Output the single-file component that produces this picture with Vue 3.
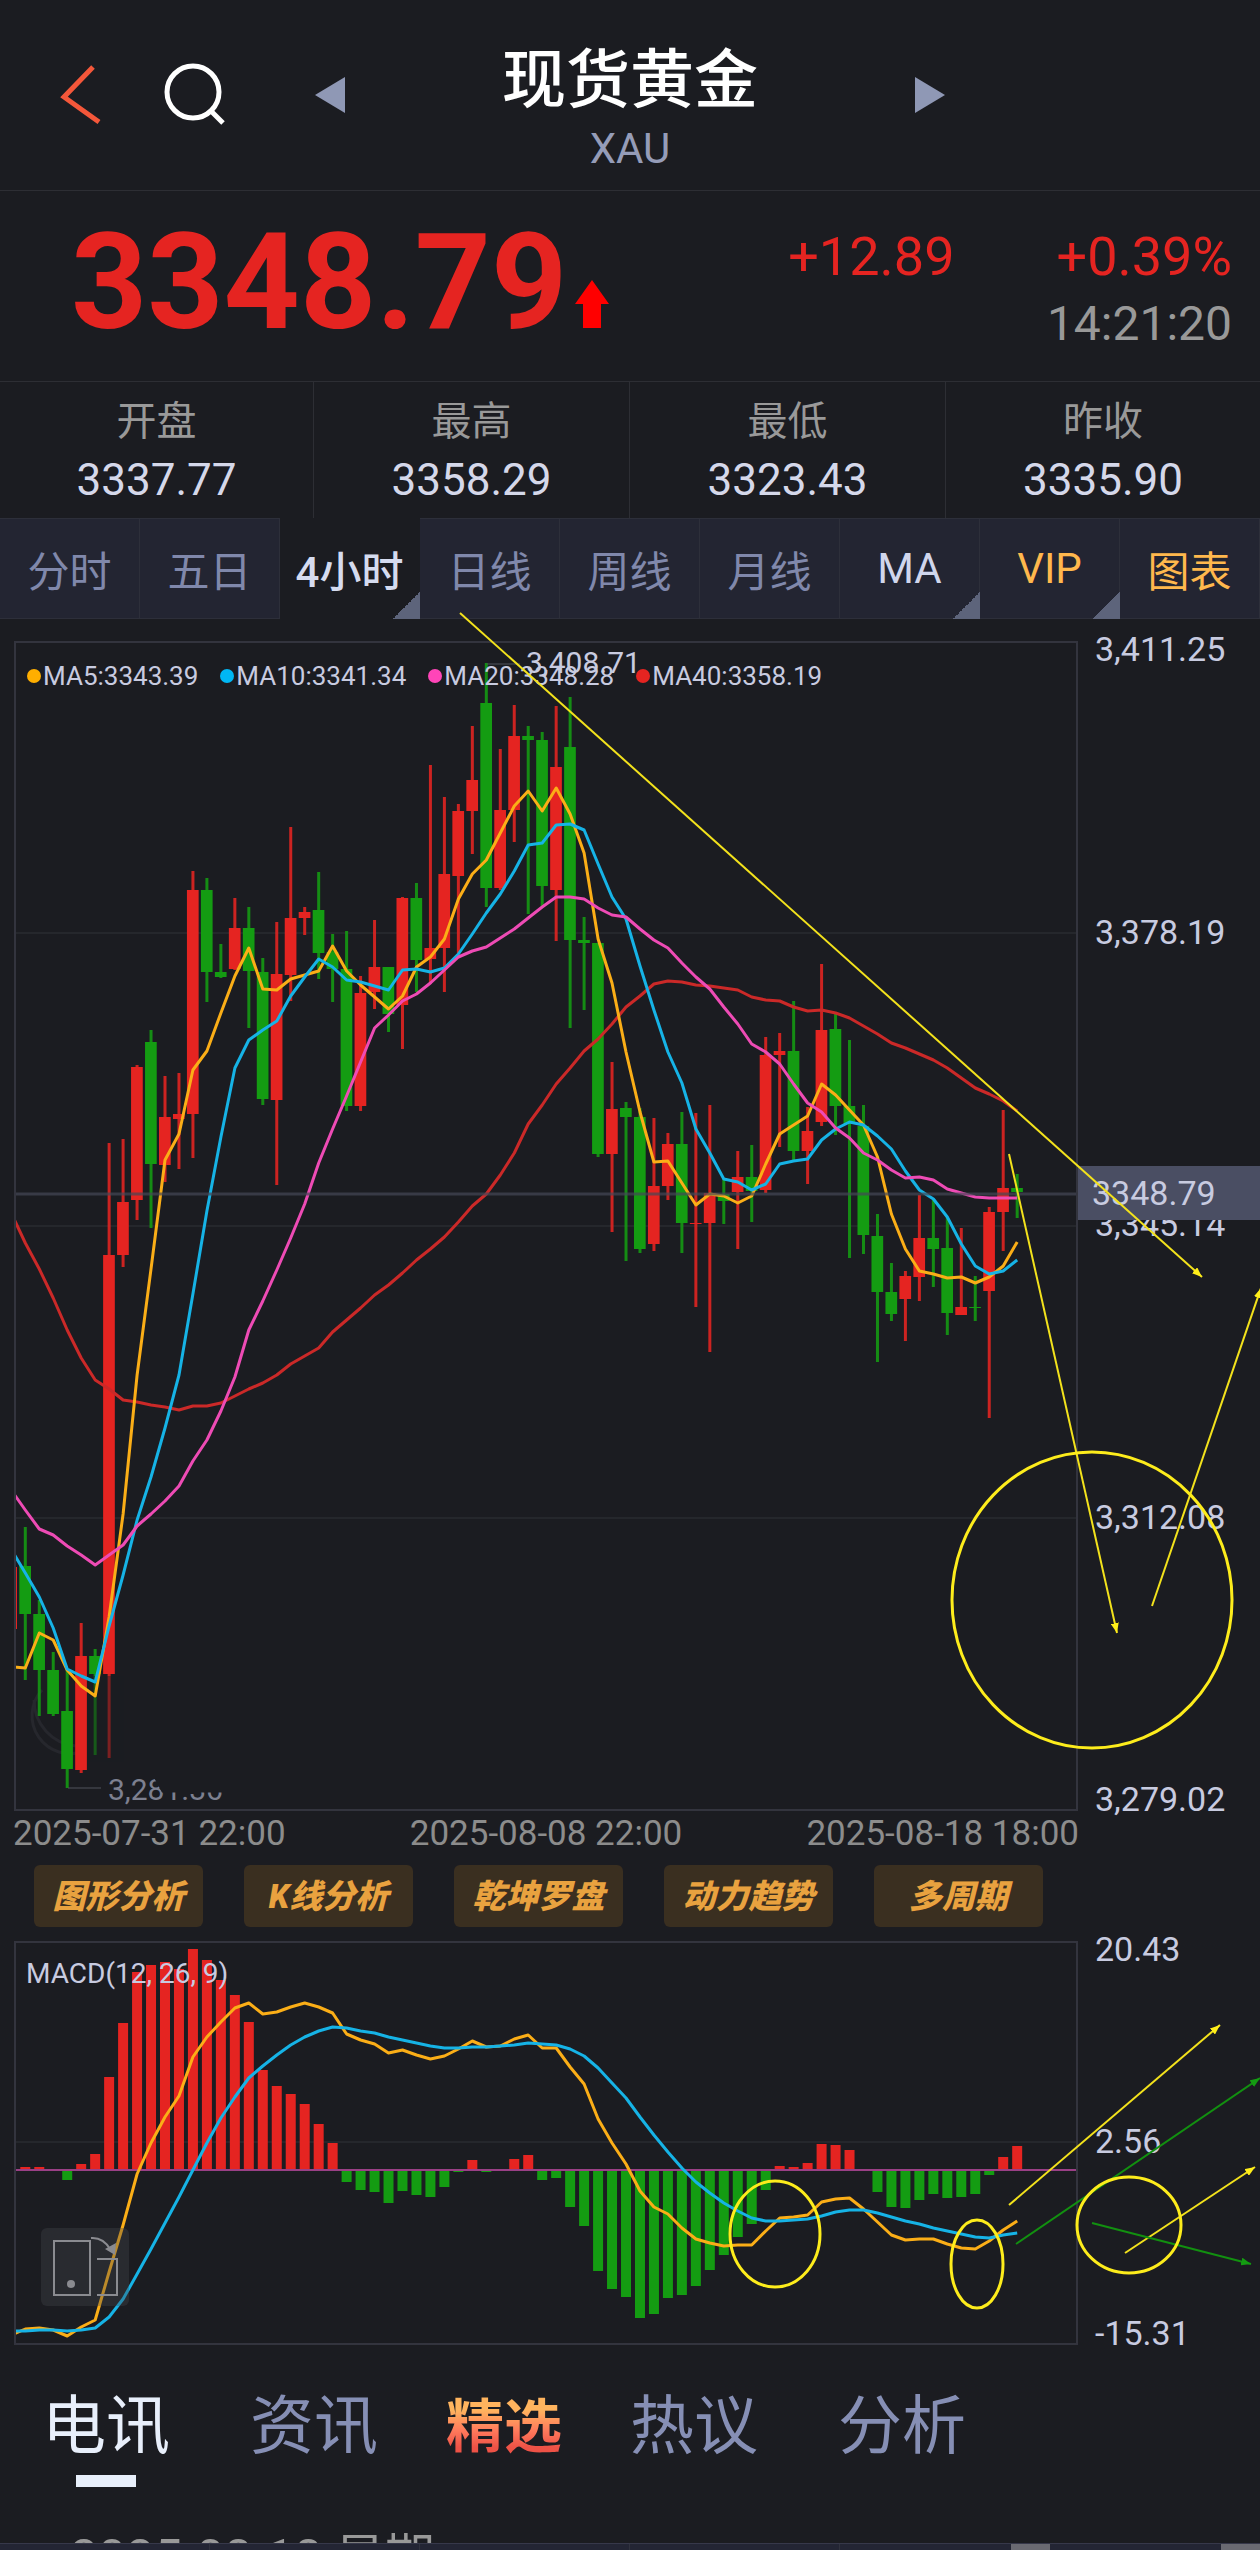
<script setup>
import { computed, ref } from 'vue';

const stats = [
  { label: '开盘', value: '3337.77' },
  { label: '最高', value: '3358.29' },
  { label: '最低', value: '3323.43' },
  { label: '昨收', value: '3335.90' }
]

const periods = [
  { name: '分时' },
  { name: '五日' },
  { name: '4小时', more: true },
  { name: '日线' },
  { name: '周线' },
  { name: '月线' },
  { name: 'MA', more: true, kind: 'light' },
  { name: 'VIP', more: true, kind: 'gold' },
  { name: '图表', kind: 'gold' }
]
const period = ref('4小时')

const legend = [
  { text: 'MA5:3343.39', color: 'orange' },
  { text: 'MA10:3341.34', color: 'blue' },
  { text: 'MA20:3348.28', color: 'pink' },
  { text: 'MA40:3358.19', color: 'red' }
]
const prices = ['3,411.25', '3,378.19', '3,345.14', '3,312.08', '3,279.02']
const macdAxis = ['20.43', '2.56', '-15.31']
const dates = ['2025-07-31 22:00', '2025-08-08 22:00', '2025-08-18 18:00']
const tools = ['图形分析', 'K线分析', '乾坤罗盘', '动力趋势', '多周期']

const newsTabs = ['电讯', '资讯', '精选', '热议', '分析']
const newsTab = ref('电讯')

// chart space: the plot starts at x 14, one candle every 13.97
const LEFT = 14
const FIRST = 25.3
const STEP = 13.97
const ZERO = 2170

// direction (1 up, 0 down), high, body top, body bottom, low
const candles = [
  [0, 1527, 1566, 1614, 1680], [0, 1600, 1614, 1670, 1716], [0, 1652, 1670, 1714, 1716],
  [0, 1670, 1711, 1769, 1788], [1, 1623, 1656, 1770, 1773], [0, 1649, 1656, 1674, 1755],
  [1, 1143, 1255, 1674, 1758], [1, 1139, 1202, 1255, 1267], [1, 1065, 1067, 1200, 1220],
  [0, 1030, 1042, 1164, 1228], [1, 1076, 1117, 1165, 1182], [1, 1073, 1114, 1119, 1169],
  [1, 871, 890, 1114, 1158], [0, 878, 890, 972, 1002], [0, 944, 972, 977, 978],
  [1, 898, 928, 969, 970], [0, 907, 928, 971, 1028], [0, 958, 972, 1099, 1105],
  [1, 922, 974, 1100, 1185], [1, 827, 918, 975, 1001], [1, 907, 912, 918, 935],
  [0, 872, 910, 953, 979], [0, 934, 952, 969, 1002], [0, 931, 969, 1106, 1111],
  [1, 976, 993, 1106, 1111], [1, 920, 967, 992, 1009], [0, 967, 967, 1014, 1032],
  [1, 897, 898, 1005, 1049], [0, 883, 898, 960, 992], [1, 765, 948, 959, 984],
  [1, 797, 874, 948, 992], [1, 804, 811, 876, 953], [1, 726, 780, 811, 854],
  [0, 663, 703, 888, 907], [1, 749, 810, 888, 890], [1, 705, 736, 810, 842],
  [0, 726, 736, 740, 914], [0, 732, 740, 886, 907], [1, 706, 767, 890, 941],
  [0, 697, 747, 940, 1028], [0, 917, 940, 943, 1010], [0, 943, 943, 1154, 1157],
  [1, 1062, 1109, 1154, 1232], [0, 1102, 1108, 1117, 1261], [0, 1108, 1117, 1249, 1253],
  [1, 1118, 1186, 1244, 1251], [1, 1133, 1144, 1186, 1200], [0, 1112, 1144, 1223, 1253],
  [1, 1113, 1223, 1224, 1307], [1, 1105, 1193, 1223, 1352], [0, 1179, 1194, 1201, 1224],
  [1, 1151, 1177, 1192, 1249], [0, 1145, 1177, 1191, 1222], [1, 1037, 1055, 1190, 1193],
  [1, 1033, 1051, 1055, 1147], [0, 1001, 1051, 1151, 1160], [1, 1107, 1131, 1151, 1184],
  [1, 964, 1030, 1122, 1126], [0, 1013, 1029, 1106, 1135], [0, 1040, 1106, 1124, 1258],
  [0, 1105, 1126, 1235, 1254], [0, 1214, 1236, 1292, 1362], [0, 1263, 1292, 1314, 1321],
  [1, 1271, 1276, 1299, 1341], [1, 1195, 1238, 1277, 1301], [0, 1200, 1238, 1249, 1287],
  [0, 1217, 1248, 1313, 1335], [1, 1228, 1307, 1315, 1315], [0, 1276, 1307, 1308, 1321],
  [1, 1207, 1212, 1291, 1418], [1, 1110, 1188, 1212, 1251], [0, 1174, 1188, 1192, 1218]
]

// the first value of every line sits on the left edge of the plot
const averages = [
  { color: 'red', ys: [1219, 1243, 1269, 1298, 1330, 1358, 1380, 1389, 1400, 1402, 1405, 1407, 1410, 1406, 1406, 1403, 1396, 1389, 1383, 1375, 1364, 1356, 1348, 1332, 1320, 1308, 1295, 1285, 1273, 1260, 1249, 1237, 1222, 1206, 1194, 1175, 1153, 1124, 1105, 1084, 1068, 1051, 1039, 1024, 1007, 996, 984, 981, 982, 985, 986, 988, 990, 997, 1000, 1001, 1007, 1011, 1010, 1013, 1018, 1026, 1034, 1043, 1048, 1054, 1060, 1068, 1078, 1088, 1094, 1101, 1111] },
  { color: 'orange', ys: [1667, 1668, 1633, 1640, 1670, 1686, 1696, 1617, 1514, 1375, 1269, 1160, 1134, 1070, 1051, 1013, 976, 948, 989, 990, 979, 975, 971, 946, 971, 985, 997, 1009, 996, 967, 957, 939, 899, 874, 860, 833, 806, 791, 811, 788, 814, 853, 939, 983, 1052, 1112, 1162, 1161, 1183, 1205, 1194, 1196, 1203, 1196, 1164, 1134, 1125, 1116, 1084, 1095, 1110, 1125, 1157, 1214, 1249, 1271, 1274, 1278, 1277, 1283, 1277, 1266, 1242] },
  { color: 'blue', ys: [1554, 1573, 1597, 1628, 1669, 1676, 1682, 1626, 1575, 1520, 1477, 1428, 1375, 1294, 1211, 1137, 1068, 1040, 1030, 1021, 996, 977, 959, 967, 980, 982, 986, 990, 970, 969, 972, 968, 954, 934, 913, 894, 871, 845, 843, 825, 824, 830, 864, 897, 919, 966, 1010, 1052, 1083, 1129, 1153, 1179, 1182, 1190, 1184, 1164, 1161, 1159, 1140, 1129, 1122, 1125, 1136, 1149, 1171, 1190, 1199, 1217, 1244, 1266, 1274, 1271, 1260] },
  { color: 'pink', ys: [1494, 1510, 1529, 1535, 1546, 1555, 1565, 1555, 1545, 1526, 1514, 1501, 1486, 1461, 1440, 1411, 1377, 1330, 1301, 1270, 1238, 1204, 1163, 1129, 1096, 1062, 1028, 1015, 1001, 994, 983, 970, 957, 951, 947, 938, 929, 918, 907, 897, 897, 899, 908, 915, 917, 929, 940, 948, 963, 977, 989, 1007, 1024, 1044, 1052, 1064, 1084, 1103, 1112, 1128, 1138, 1153, 1160, 1170, 1178, 1177, 1180, 1189, 1193, 1197, 1198, 1198, 1198] }
]

const histogram = [2167, 2167, 2170, 2180, 2164, 2154, 2077, 2023, 1972, 1965, 1962, 1969, 1949, 1960, 1980, 1995, 2022, 2070, 2086, 2094, 2104, 2124, 2143, 2182, 2190, 2192, 2203, 2191, 2195, 2197, 2187, 2172, 2160, 2172, 2169, 2159, 2155, 2180, 2178, 2207, 2226, 2271, 2289, 2297, 2318, 2314, 2298, 2295, 2286, 2270, 2255, 2237, 2224, 2190, 2166, 2167, 2163, 2144, 2145, 2150, 2170, 2192, 2207, 2208, 2200, 2194, 2198, 2197, 2194, 2175, 2157, 2146]

const macdLines = [
  { color: 'orange', ys: [2334, 2329, 2328, 2330, 2336, 2327, 2320, 2272, 2225, 2174, 2143, 2117, 2096, 2057, 2037, 2022, 2008, 2003, 2014, 2012, 2007, 2003, 2007, 2013, 2034, 2040, 2044, 2053, 2050, 2055, 2059, 2056, 2049, 2041, 2047, 2046, 2039, 2035, 2048, 2048, 2067, 2084, 2119, 2143, 2164, 2191, 2207, 2214, 2228, 2239, 2243, 2246, 2245, 2245, 2231, 2218, 2217, 2215, 2202, 2199, 2198, 2209, 2222, 2235, 2240, 2239, 2239, 2244, 2248, 2249, 2241, 2230, 2221] },
  { color: 'blue', ys: [2331, 2331, 2330, 2330, 2331, 2330, 2328, 2317, 2299, 2274, 2249, 2223, 2197, 2170, 2143, 2118, 2097, 2078, 2066, 2055, 2045, 2037, 2031, 2027, 2028, 2031, 2033, 2037, 2040, 2043, 2046, 2048, 2048, 2047, 2047, 2046, 2045, 2043, 2044, 2045, 2049, 2056, 2068, 2083, 2098, 2117, 2135, 2152, 2168, 2182, 2193, 2203, 2211, 2218, 2221, 2221, 2220, 2219, 2216, 2212, 2210, 2210, 2213, 2217, 2221, 2224, 2228, 2231, 2234, 2237, 2238, 2235, 2233] }
]

const arrows = [
  { color: 'yellow', from: [460, 613], to: [1202, 1277] },
  { color: 'yellow', from: [1009, 1154], to: [1117, 1633] },
  { color: 'yellow', from: [1152, 1606], to: [1261, 1288] },
  { color: 'yellow', from: [1009, 2205], to: [1220, 2025] },
  { color: 'green', from: [1016, 2244], to: [1260, 2078] },
  { color: 'yellow', from: [1125, 2253], to: [1255, 2167] },
  { color: 'green', from: [1092, 2223], to: [1251, 2264] }
]
const rings = [
  [1092, 1600, 140, 148],
  [775, 2234, 45, 53],
  [977, 2264, 26, 44],
  [1129, 2225, 52, 48]
]

const xAt = (i) => FIRST + STEP * i

function toPoints(ys) {
  return ys.map((y, i) => `${i === 0 ? LEFT : xAt(i - 1).toFixed(1)},${y}`).join(' ')
}

const candleShapes = computed(() => candles.map(([up, high, top, bottom, low], i) => ({
  color: up ? 'red' : 'green',
  x: xAt(i),
  high,
  top,
  body: Math.max(bottom - top, 1),
  wick: low - high
})))

const bars = computed(() => histogram.map((y, i) => ({
  color: y < ZERO ? 'red' : 'green',
  x: xAt(i) - 5,
  y: Math.min(y, ZERO),
  height: Math.abs(y - ZERO)
})))
</script>

<template>
  <div class="page">
    <header class="header">
      <div class="header-left">
        <button class="icon-btn" aria-label="返回">
          <svg width="42" height="62" viewBox="0 0 42 62"><path class="back" d="M33 3 4 33 39 58" /></svg>
        </button>
        <button class="icon-btn" aria-label="搜索">
          <svg width="62" height="64" viewBox="0 0 62 64"><circle class="lens" cx="29" cy="29" r="26" /><path class="lens" d="M47 48 59 60" /></svg>
        </button>
      </div>
      <div class="switcher">
        <button class="icon-btn" aria-label="上一个">
          <svg width="30" height="36" viewBox="0 0 30 36"><path class="step" d="M0 18 30 0V36Z" /></svg>
        </button>
        <div class="title-box">
          <h1 class="title">现货黄金</h1>
          <div class="symbol">XAU</div>
        </div>
        <button class="icon-btn" aria-label="下一个">
          <svg width="30" height="36" viewBox="0 0 30 36"><path class="step" d="M30 18 0 0V36Z" /></svg>
        </button>
      </div>
    </header>

    <section class="quote">
      <div class="price">3348.79</div>
      <svg class="up" width="34" height="48" viewBox="0 0 34 48"><path d="M17 0 34 24H26V48H8V24H0Z" /></svg>
      <div class="change">
        <div class="change-row"><span>+12.89</span><span>+0.39%</span></div>
        <div class="time">14:21:20</div>
      </div>
    </section>

    <dl class="stats">
      <div v-for="s in stats" :key="s.label" class="stat">
        <dt>{{ s.label }}</dt>
        <dd>{{ s.value }}</dd>
      </div>
    </dl>

    <nav class="periods">
      <button
        v-for="p in periods"
        :key="p.name"
        class="period"
        :class="[p.kind, { active: p.name === period, more: p.more }]"
        @click="period = p.name"
      >{{ p.name }}</button>
    </nav>

    <section class="charts">
      <div class="chart-row">
        <div class="plot">
          <svg class="kline" viewBox="14 641 1064 1170" preserveAspectRatio="none">
            <g class="grid">
              <path d="M14 933H1078M14 1226H1078M14 1518H1078" />
            </g>
            <g class="watermark">
              <path d="M42 1690A38 38 0 0 0 84 1751" />
              <path d="M34 1700A46 46 0 0 0 76 1746" />
            </g>
            <rect class="red" x="14" y="1567" width="3" height="62" />
            <g v-for="c in candleShapes" :key="c.x" :class="c.color">
              <rect class="wick" :x="c.x - 1.5" :y="c.high" width="3" :height="c.wick" />
              <rect :x="c.x - 6" :y="c.top" width="11.7" :height="c.body" />
            </g>
            <rect class="fade" x="88" y="1676" width="36" height="86" />
            <polyline
              v-for="m in averages"
              :key="m.color"
              class="line"
              :class="`line-${m.color}`"
              :points="toPoints(m.ys)"
            />
            <path class="last-line" d="M14 1194H1078" />
            <path class="lead" d="M487 664H520M68 1788H101" />
            <rect class="frame" x="15" y="642" width="1062" height="1168" />
          </svg>
          <div class="legend">
            <span v-for="l in legend" :key="l.text" class="legend-item">
              <i class="dot" :class="`dot-${l.color}`"></i>{{ l.text }}
            </span>
          </div>
          <span class="mark mark-high">3,408.71</span>
          <span class="mark mark-low">3,281.36</span>
        </div>
        <div class="axis axis-price">
          <span v-for="p in prices" :key="p">{{ p }}</span>
          <div class="last-price">3348.79</div>
        </div>
      </div>

      <div class="dates">
        <span v-for="d in dates" :key="d">{{ d }}</span>
      </div>

      <div class="tools">
        <button v-for="t in tools" :key="t" class="tool">{{ t }}</button>
      </div>

      <div class="chart-row">
        <div class="plot">
          <svg class="macd" viewBox="14 1941 1064 404" preserveAspectRatio="none">
            <g class="grid"><path d="M14 2142H1078" /></g>
            <rect class="green" x="14" y="2170" width="2" height="8" />
            <rect v-for="b in bars" :key="b.x" :class="b.color" :x="b.x" :y="b.y" width="10" :height="b.height" />
            <path class="zero" d="M14 2170H1078" />
            <polyline
              v-for="m in macdLines"
              :key="m.color"
              class="line"
              :class="`line-${m.color}`"
              :points="toPoints(m.ys)"
            />
            <rect class="frame" x="15" y="1942" width="1062" height="402" />
          </svg>
          <span class="macd-name">MACD(12, 26, 9)</span>
          <button class="rotate" aria-label="横屏">
            <svg width="88" height="78" viewBox="0 0 88 78">
              <rect class="stroke" x="13" y="13" width="36" height="54" />
              <circle class="fill" cx="30" cy="56" r="4" />
              <path class="stroke" d="M56 31H76V67H56" />
              <path class="stroke" d="M50 10Q62 9 69 21" />
              <path class="fill" d="M64 21 75 15 74 27Z" />
            </svg>
          </button>
        </div>
        <div class="axis axis-macd">
          <span v-for="p in macdAxis" :key="p">{{ p }}</span>
        </div>
      </div>

      <svg class="drawings" viewBox="0 619 1260 1726" preserveAspectRatio="none">
        <defs>
          <marker v-for="c in ['yellow', 'green']" :id="`head-${c}`" :key="c" viewBox="0 0 10 8" refX="10" refY="4" markerWidth="10" markerHeight="8" markerUnits="userSpaceOnUse" orient="auto">
            <path :class="`head-${c}`" d="M0 0 10 4 0 8Z" />
          </marker>
        </defs>
        <line
          v-for="(a, i) in arrows"
          :key="i"
          class="arrow"
          :class="`arrow-${a.color}`"
          :x1="a.from[0]"
          :y1="a.from[1]"
          :x2="a.to[0]"
          :y2="a.to[1]"
          :marker-end="`url(#head-${a.color})`"
        />
        <ellipse v-for="(r, i) in rings" :key="i" class="ring" :cx="r[0]" :cy="r[1]" :rx="r[2]" :ry="r[3]" />
      </svg>
    </section>

    <nav class="news-tabs">
      <button
        v-for="t in newsTabs"
        :key="t"
        class="news-tab"
        :class="{ current: t === newsTab, featured: t === '精选' }"
        @click="newsTab = t"
      ><span>{{ t }}</span></button>
    </nav>
    <div class="news">2025-08-18 星期一</div>
    <footer class="bottom-bar">
      <span v-for="n in 6" :key="n" class="bottom-cell" :class="{ lit: n > 4 }"></span>
    </footer>
  </div>
</template>

<style>
body {
  background: #1b1c21;
}
</style>

<style scoped>
.page {
  background: #1b1c21;
  color: #c8cbe0;
  font-family: Roboto, "Noto Sans CJK SC", sans-serif;
  overflow: hidden;
}
button {
  margin: 0;
  padding: 0;
  border: 0;
  background: none;
  color: inherit;
  font-family: inherit;
}
svg {
  display: block;
}

.header {
  display: grid;
  grid-template-columns: 1fr 50% 1fr;
  align-items: center;
  height: 190px;
  border-bottom: 1px solid #2d2e34;
}
.header-left {
  display: flex;
  align-items: center;
  gap: 62px;
  padding-left: 60px;
}
.back {
  fill: none;
  stroke: #f4573a;
  stroke-width: 5;
}
.lens {
  fill: none;
  stroke: #fff;
  stroke-width: 5;
}
.step {
  fill: #8f98b5;
}
.switcher {
  display: flex;
  align-items: center;
  justify-content: space-between;
}
.title-box {
  padding-top: 28px;
  text-align: center;
}
.title {
  margin: 0;
  color: #fff;
  font-size: 64px;
  font-weight: 500;
  line-height: 80px;
}
.symbol {
  color: #959cb8;
  font-size: 42px;
  line-height: 56px;
}

.quote {
  display: flex;
  height: 190px;
  padding: 0 28px 0 71px;
  border-bottom: 1px solid #2d2e34;
  color: #e52421;
}
.price {
  font-size: 133px;
  font-weight: 700;
  line-height: 184px;
}
.up {
  margin: 89px 0 0 8px;
  fill: #f00;
}
.change {
  flex: 1;
  padding-top: 33px;
  text-align: right;
}
.change-row {
  display: flex;
  justify-content: flex-end;
  gap: 102px;
  font-size: 54px;
  line-height: 66px;
}
.time {
  color: #999;
  font-size: 48px;
  line-height: 68px;
}

.stats {
  display: grid;
  grid-template-columns: 313fr 316fr 316fr 315fr;
  margin: 0;
}
.stat {
  padding: 12px 0 8px;
  text-align: center;
}
.stat + .stat {
  border-left: 1px solid #2d2e34;
}
.stat dt {
  color: #999;
  font-size: 40px;
  line-height: 56px;
}
.stat dd {
  margin: 0;
  color: #d5d8ea;
  font-size: 44px;
  line-height: 60px;
}

.periods {
  display: grid;
  grid-template-columns: repeat(9, 1fr);
}
.period {
  position: relative;
  height: 101px;
  border: solid #2d2f3a;
  border-width: 1px 1px 1px 0;
  background: #232532;
  color: #8088ab;
  font-size: 42px;
}
.period.light {
  color: #d0d6ec;
}
.period.gold {
  color: #ffb84d;
}
.period.active {
  border-color: #1b1c21;
  background: #1b1c21;
  color: #d5dbef;
  font-weight: 500;
}
.period.more::after {
  content: "";
  position: absolute;
  right: -1px;
  bottom: -1px;
  width: 27px;
  height: 27px;
  background: linear-gradient(135deg, transparent 50%, #5d647b 50%);
}

.charts {
  position: relative;
  padding-top: 22px;
}
.chart-row {
  display: grid;
  grid-template-columns: 1064fr 182fr;
  padding-left: 14px;
}
.plot {
  position: relative;
}
.kline {
  width: 100%;
  height: 1170px;
}
.macd {
  width: 100%;
  height: 404px;
}
.grid {
  stroke: #25272c;
  stroke-width: 2;
}
.watermark {
  fill: none;
  stroke: #26272d;
  stroke-width: 3;
}
.frame {
  fill: none;
  stroke: #33343e;
  stroke-width: 2;
}
.red {
  fill: #e52421;
}
.green {
  fill: #149c12;
}
.wick {
  opacity: .88;
}
.fade {
  fill: #1b1c21;
  opacity: .45;
}
.line {
  fill: none;
  stroke-width: 3;
  stroke-linejoin: round;
}
.line-orange {
  stroke: #fbae17;
}
.line-blue {
  stroke: #16b3e6;
}
.line-pink {
  stroke: #ee4bb5;
}
.line-red {
  stroke: #cb2928;
}
.last-line {
  stroke: #454857;
  stroke-width: 3;
  opacity: .7;
}
.lead {
  stroke: #50525c;
}
.zero {
  stroke: #9a3f86;
  stroke-width: 2;
}

.legend {
  position: absolute;
  top: 21px;
  left: 13px;
  display: flex;
  gap: 22px;
  font-size: 26px;
  line-height: 28px;
  white-space: nowrap;
}
.legend-item {
  display: flex;
  align-items: center;
  gap: 2px;
}
.dot {
  width: 14px;
  height: 14px;
  border-radius: 50%;
}
.dot-orange {
  background: #ffae00;
}
.dot-blue {
  background: #00b7f4;
}
.dot-pink {
  background: #ff45b8;
}
.dot-red {
  background: #e52421;
}
.mark {
  position: absolute;
  font-size: 30px;
  line-height: 32px;
}
.mark-high {
  top: 6px;
  left: 512px;
}
.mark-low {
  bottom: 5px;
  left: 94px;
  color: #7d8090;
  clip-path: polygon(0 0, 44px 0, 54px 58%, 100% 58%, 100% 100%, 0 100%);
}

.axis {
  position: relative;
  display: grid;
  margin: -2px 0 2px;
  font-size: 34px;
  line-height: 20px;
}
.axis > span {
  align-self: center;
  padding-left: 17px;
}
.axis > span:first-child {
  align-self: start;
}
.axis > span:nth-last-child(1 of span) {
  align-self: end;
}
.axis-price {
  grid-template-rows: 1fr 2fr 2fr 2fr 1fr;
}
.axis-macd {
  grid-template-rows: 1fr 2fr 1fr;
}
.last-price {
  position: absolute;
  top: 45%;
  right: 0;
  left: 0;
  padding-left: 14px;
  background: #4a4e63;
  line-height: 54px;
}

.dates {
  display: flex;
  justify-content: space-between;
  width: calc(100% * 1066 / 1260);
  margin-left: 13px;
  color: #8c8c8c;
  font-size: 35px;
  line-height: 46px;
}
.tools {
  display: flex;
  gap: 41px;
  margin: 8px 217px 14px 34px;
}
.tool {
  flex: 1;
  height: 62px;
  padding-bottom: 4px;
  border-radius: 6px;
  background: #3a2f20;
  color: #e9a23f;
  font-size: 33px;
  font-style: italic;
  font-weight: 900;
  white-space: nowrap;
}
.macd-name {
  position: absolute;
  top: 17px;
  left: 12px;
  font-size: 28px;
  line-height: 32px;
}
.rotate {
  position: absolute;
  bottom: 39px;
  left: 27px;
  border-radius: 6px;
  background: rgba(70, 71, 78, .35);
}
.rotate .stroke {
  fill: none;
  stroke: #8a8b90;
  stroke-width: 2;
}
.rotate .fill {
  fill: #8a8b90;
}

.drawings {
  position: absolute;
  inset: 0;
  width: 100%;
  height: 100%;
  overflow: visible;
  pointer-events: none;
}
.arrow {
  stroke-width: 2;
}
.arrow-yellow {
  stroke: #f3e21c;
}
.arrow-green {
  stroke: #129010;
}
.head-yellow {
  fill: #ffee1a;
}
.head-green {
  fill: #149c12;
}
.ring {
  fill: none;
  stroke: #fdec1c;
  stroke-width: 3;
}

.news-tabs {
  display: flex;
  height: 165px;
  padding: 42px 0 0 2px;
  box-sizing: border-box;
}
.news-tab {
  position: relative;
  height: 100px;
  padding: 0 40px 20px;
  color: #868fb5;
  font-size: 64px;
  line-height: 80px;
}
.news-tab.current {
  color: #e8effb;
}
.news-tab.current::after {
  content: "";
  position: absolute;
  bottom: 0;
  left: 50%;
  width: 60px;
  height: 12px;
  margin-left: -30px;
  background: #e8effb;
}
.news-tab.featured {
  padding: 0 28px 20px;
  font-size: 58px;
  font-weight: 700;
}
.featured span {
  background: linear-gradient(#ffb45e 25%, #ff7a5c 55%, #ee5246 80%);
  background-clip: text;
  color: transparent;
}
.news {
  height: 33px;
  padding: 20px 0 0 70px;
  box-sizing: border-box;
  color: #999;
  font-size: 50px;
  line-height: 56px;
  overflow: hidden;
}
.bottom-bar {
  display: grid;
  grid-template-columns: repeat(6, 1fr);
  height: 7px;
  border-top: 1px solid #36384a;
  box-sizing: border-box;
  background: #232534;
}
.bottom-cell {
  border-right: 1px solid #30323f;
}
.bottom-cell.lit {
  border-right: 39px solid #6a6a72;
}
</style>
